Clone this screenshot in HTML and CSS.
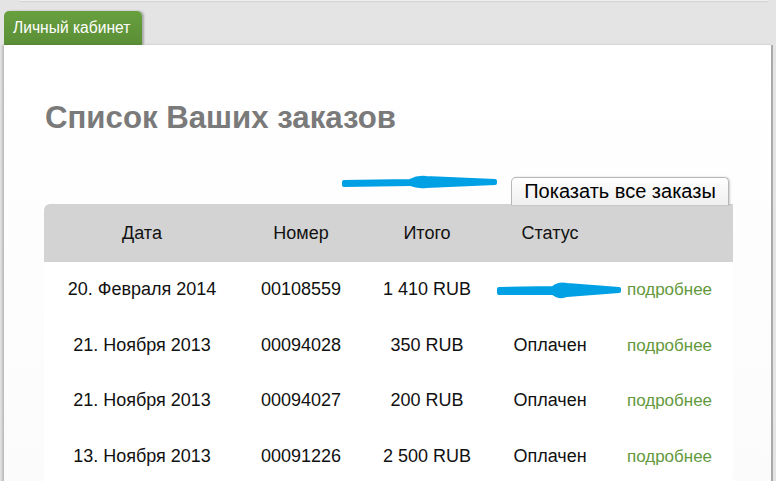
FILE: index.html
```html
<!DOCTYPE html>
<html lang="ru">
<head>
<meta charset="utf-8">
<title>Личный кабинет</title>
<link rel="stylesheet" href="styles.css">
</head>
<body>
<div class="topline"></div>
<div class="tabs">
  <div class="tab">Личный кабинет</div>
</div>
<div class="panel">
  <h1 class="title">Список Ваших заказов</h1>
  <div class="toolbar">
    <button class="btn-all">Показать все заказы</button>
  </div>
  <table class="orders">
    <colgroup>
      <col class="c-date"><col class="c-num"><col class="c-sum"><col class="c-status"><col class="c-link">
    </colgroup>
    <thead>
      <tr><th>Дата</th><th>Номер</th><th class="sum">Итого</th><th>Статус</th><th></th></tr>
    </thead>
    <tbody>
      <tr><td>20. Февраля 2014</td><td>00108559</td><td class="sum">1 410 RUB</td><td></td><td><a class="more" href="#">подробнее</a></td></tr>
      <tr><td>21. Ноября 2013</td><td>00094028</td><td class="sum">350 RUB</td><td>Оплачен</td><td><a class="more" href="#">подробнее</a></td></tr>
      <tr><td>21. Ноября 2013</td><td>00094027</td><td class="sum">200 RUB</td><td>Оплачен</td><td><a class="more" href="#">подробнее</a></td></tr>
      <tr><td>13. Ноября 2013</td><td>00091226</td><td class="sum">2 500 RUB</td><td>Оплачен</td><td><a class="more" href="#">подробнее</a></td></tr>
    </tbody>
  </table>
  <svg class="arrow arrow-1" width="160" height="16" viewBox="0 0 160 16">
    <path d="M4 8 L70 7 Q78 3 86 4 L155 7 L155 9 L86 12 Q78 13 70 10 L4 11 Z" fill="#00a0e4" stroke="#00a0e4" stroke-width="4" stroke-linejoin="round"/>
  </svg>
  <svg class="arrow arrow-2" width="130" height="20" viewBox="0 0 130 20">
    <path d="M4 9 L58 8 Q64 3 72 5 L124 9 L124 11 L72 15 Q64 18 58 13 L4 13 Z" fill="#00a0e4" stroke="#00a0e4" stroke-width="4" stroke-linejoin="round"/>
  </svg>
</div>
</body>
</html>
```

FILE: styles.css
```css
html, body {
  margin: 0;
  padding: 0;
}
body {
  background: #e4e4e4;
  font-family: "Liberation Sans", Arial, sans-serif;
  height: 481px;
  overflow: hidden;
}
.topline {
  height: 1px;
  margin: 0 8px 0 20px;
  background: #f0f0f0;
  box-shadow: 0 1px 1px #cfcfcf;
}
.tabs {
  display: flex;
  padding: 10px 0 0 4px;
}
.tab {
  width: 138px;
  height: 34px;
  box-sizing: border-box;
  padding: 8px 0 0 9px;
  background: linear-gradient(#68a03f, #5a8e36);
  color: #fff;
  font-size: 15.6px;
  white-space: nowrap;
  border-radius: 5px 5px 0 0;
  box-shadow: 2px 0 2px rgba(0,0,0,0.25);
}
.panel {
  position: relative;
  margin-left: 4px;
  width: 769px;
  height: 440px;
  box-sizing: border-box;
  background: linear-gradient(#ffffff, #fbfbfb);
  border-right: 2px solid #a9a9a9;
  box-shadow: -2px 0 2px rgba(0,0,0,0.18);
  padding: 55px 40px 0 40px;
}
.title {
  margin: 0 0 0 1px;
  font-size: 31.2px;
  line-height: 36px;
  font-weight: bold;
  color: #7a7a7a;
  white-space: nowrap;
}
.toolbar {
  display: flex;
  justify-content: flex-end;
  margin-top: 41px;
  padding-right: 2px;
}
.btn-all {
  width: 218px;
  height: 28px;
  margin: 0;
  padding: 0;
  font-family: "Liberation Sans", Arial, sans-serif;
  font-size: 20px;
  color: #000;
  background: linear-gradient(#ffffff, #efefef);
  border: 1px solid #b8b8b8;
  border-bottom: none;
  border-radius: 5px 5px 0 0;
  box-shadow: 1px 0 2px rgba(0,0,0,0.2);
}
.orders {
  width: 689px;
  margin-top: -1px;
  table-layout: fixed;
  border-collapse: separate;
  border-spacing: 0;
  font-size: 18px;
  color: #111;
}
.c-date { width: 196px; }
.c-num { width: 122px; }
.c-sum { width: 122px; }
.c-status { width: 132px; }
.c-link { width: 117px; }
.orders thead th {
  background: #d3d3d3;
  height: 58px;
  padding: 0;
  font-weight: normal;
  text-align: center;
  color: #111;
}
.orders thead th:first-child {
  border-top-left-radius: 6px;
}
.orders td {
  height: 55.5px;
  padding: 0;
  text-align: center;
  background: #fff;
  white-space: nowrap;
}
.orders .sum {
  padding-left: 8px;
}
.orders td:last-child {
  padding-right: 10px;
}
.more {
  color: #63993c;
  text-decoration: none;
  font-size: 17px;
}
.arrow {
  position: absolute;
}
.arrow-1 {
  left: 336px;
  top: 129px;
}
.arrow-2 {
  left: 491px;
  top: 235px;
}
```
